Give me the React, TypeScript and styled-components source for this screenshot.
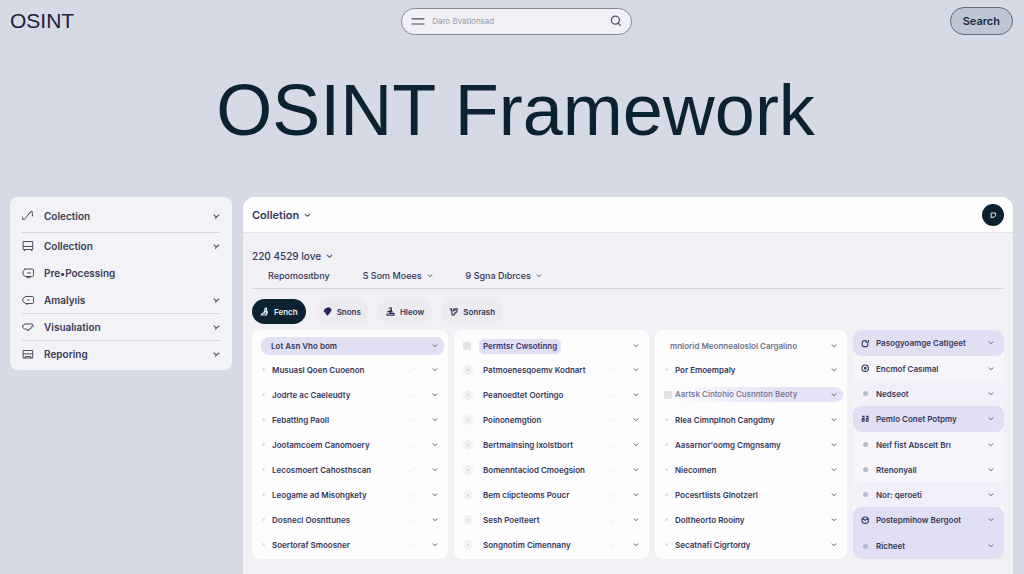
import React from "react";
import styled, { createGlobalStyle, css } from "styled-components";

const ink = "#34365a";
const deep = "#0b2230";
const lilac = "#e1dff4";

const GlobalStyle = createGlobalStyle`
  *, *::before, *::after { box-sizing: border-box; }
  body {
    margin: 0;
    background: #d6dae5;
    color: ${ink};
    font-family: Inter, "Liberation Sans", sans-serif;
  }
  button, input { font: inherit; color: inherit; }
  button { border: 0; padding: 0; background: none; text-align: left; cursor: pointer; }
  svg { display: block; flex: none; }
`;

const Page = styled.div`
  min-height: 100vh;
  display: flex;
  flex-direction: column;
`;

const TopBar = styled.header`
  display: grid;
  grid-template-columns: 39fr 23fr 38fr;
  align-items: center;
  padding: 7px 11px 0 10px;
`;

const Logo = styled.a`
  color: #1b2138;
  font-family: "Liberation Sans", Arial, sans-serif;
  font-size: 21px;
  line-height: 28px;
  text-decoration: none;
`;

const SearchForm = styled.form`
  display: flex;
  align-items: center;
  gap: 7px;
  height: 27px;
  padding: 0 9px;
  border: 1px solid #85889a;
  border-radius: 14px;
  background: #f0f0f6;
  color: #4a4c5c;
`;

const SearchInput = styled.input`
  flex: 1;
  min-width: 0;
  border: 0;
  padding: 0;
  background: none;
  outline: none;
  font-size: 8px;
  &::placeholder { color: #9c9da9; opacity: 1; }
`;

const SearchButton = styled.button`
  justify-self: end;
  height: 28px;
  padding: 0 12px;
  border: 1px solid #5f6a7b;
  border-radius: 14px;
  background: #bdc7d3;
  color: #1d2740;
  font-size: 11px;
  font-weight: 600;
`;

const Title = styled.h1`
  margin: 0;
  padding: 31px 0 43px 7px;
  color: ${deep};
  font-family: "Liberation Sans", Arial, sans-serif;
  font-size: 72px;
  font-weight: 400;
  line-height: 88px;
  text-align: center;
`;

const Body = styled.div`
  flex: 1;
  display: grid;
  grid-template-columns: 222px minmax(0, 1fr);
  gap: 11px;
  padding: 0 11px 0 10px;
`;

const Sidebar = styled.nav`
  align-self: start;
  padding: 3px 12px 2px;
  border-radius: 8px;
  background: #f2f2f7;
`;

const SideItem = styled.button<{ $ruled?: boolean; $tall?: boolean }>`
  display: flex;
  align-items: center;
  width: 100%;
  height: ${(p) => (p.$tall ? 33 : 27)}px;
  border-bottom: 1px solid ${(p) => (p.$ruled ? "#d3d3db" : "transparent")};
  color: #3a3c55;
  font-size: 10px;
  font-weight: 600;
  svg:last-child { margin-left: auto; }
`;

const SideLabel = styled.span`
  margin-left: 10px;
`;

const Panel = styled.main`
  display: flex;
  flex-direction: column;
  border-radius: 12px 12px 0 0;
  background: #f0f0f5;
  overflow: hidden;
`;

const PanelHead = styled.div`
  display: flex;
  align-items: center;
  justify-content: space-between;
  height: 36px;
  padding: 1px 9px 0;
  border-bottom: 1px solid #e3e3ea;
  background: #fefefe;
`;

const Dropdown = styled.button<{ $size: number; $bold?: boolean }>`
  display: flex;
  align-items: center;
  gap: 5px;
  font-size: ${(p) => p.$size}px;
  font-weight: ${(p) => (p.$bold ? 600 : 500)};
  line-height: 16px;
  white-space: nowrap;
`;

const Avatar = styled.button`
  display: grid;
  place-items: center;
  width: 22px;
  height: 22px;
  border-radius: 50%;
  background: ${deep};
  color: #dfe6ee;
`;

const PanelBody = styled.div`
  padding: 15px 9px;
`;

const Tabs = styled.div`
  display: flex;
  align-items: flex-start;
  gap: 33px;
  height: 25px;
  padding: 4px 16px 0;
  border-bottom: 1px solid #d5d4de;
`;

const Chips = styled.div`
  display: flex;
  gap: 9px;
  padding: 10px 0 6px;
`;

const Chip = styled.button<{ $active?: boolean }>`
  display: inline-flex;
  align-items: center;
  gap: 5px;
  height: 25px;
  padding: 0 8px;
  border-radius: 13px;
  background: ${(p) => (p.$active ? deep : "#ebebf0")};
  color: ${(p) => (p.$active ? "#e6edf2" : ink)};
  font-size: 8px;
  font-weight: 600;
`;

const Columns = styled.div`
  display: grid;
  grid-template-columns: 196fr 195fr 192fr 151fr;
  gap: 6px;
`;

const Card = styled.div`
  padding: 7px 4px 1px 9px;
  border-radius: 8px;
  background: #fdfdfe;
`;

const itemBase = css`
  display: flex;
  align-items: center;
  width: 100%;
  font-size: 8px;
  font-weight: 600;
  white-space: nowrap;
`;

const Item = styled.button<{ $first?: boolean; $fill?: boolean }>`
  ${itemBase}
  height: ${(p) => (p.$first ? 18 : 25)}px;
  margin-bottom: ${(p) => (p.$first ? 2 : 0)}px;
  padding-right: 6px;
  border-radius: 8px;
  background: ${(p) => (p.$first && p.$fill ? lilac : "transparent")};
`;

const Marker = styled.span<{ $width: number }>`
  display: flex;
  align-items: center;
  flex: none;
  width: ${(p) => p.$width}px;
`;

const Dot = styled.i<{ $kind: "speck" | "ring" | "square" | "bead" }>`
  display: block;
  ${(p) => p.$kind === "speck" && css`width: 3px; height: 3px; margin-left: 1px; border-radius: 50%; background: #dedee6;`}
  ${(p) => p.$kind === "ring" && css`width: 10px; height: 10px; border: 4px solid #f1f1f4; border-radius: 50%; background: #cfcfd8;`}
  ${(p) => p.$kind === "square" && css`width: 8px; height: 8px; border-radius: 1px; background: #e2e2e8;`}
  ${(p) => p.$kind === "bead" && css`width: 5px; height: 5px; margin-left: 2px; border-radius: 50%; background: #b9b9ca;`}
`;

const Label = styled.span<{ $tone?: "soft" | "tag" | "bar" }>`
  ${(p) => p.$tone === "soft" && css`color: #6d7288;`}
  ${(p) => p.$tone === "tag" && css`margin-left: -4px; padding: 0 4px; border-radius: 5px; background: ${lilac}; color: #3b3570; line-height: 15px;`}
  ${(p) => p.$tone === "bar" && css`flex: 1; margin-right: -12px; border-radius: 0 8px 8px 0; background: linear-gradient(90deg, #fdfdfe, #e6e2f7 60%); color: #6f6c94; font-weight: 500; line-height: 15px;`}
`;

const Tail = styled.span`
  display: flex;
  align-items: center;
  gap: 17px;
  margin-left: auto;
`;

const Stack = styled.div`
  border-radius: 8px;
  background: #f6f6fa;
  overflow: hidden;
`;

const StackItem = styled.button<{ $shade: "none" | "tint" | "fill"; $join?: "top" | "bottom" }>`
  ${itemBase}
  height: ${(p) => (p.$shade === "fill" ? 26 : 25)}px;
  padding: 0 10px 0 8px;
  border-radius: ${(p) => (p.$join === "top" ? "8px 8px 0 0" : p.$join === "bottom" ? "0 0 8px 8px" : "8px")};
  background: ${(p) => ({ none: "transparent", tint: "#f1eff9", fill: lilac })[p.$shade]};
`;

const Chevron = ({ size = 6 }: { size?: number }) => (
  <svg width={size} height={size} viewBox="0 0 6 6" fill="none" stroke="#66687f" strokeWidth="1" strokeLinecap="round" strokeLinejoin="round" aria-hidden="true">
    <path d="M1 1.9 3 3.6 5 1.9" />
  </svg>
);

const SideChevron = () => (
  <svg width="7" height="7" viewBox="0 0 7 7" fill="none" stroke="#55576c" strokeWidth="1.1" strokeLinecap="round" aria-hidden="true">
    <path d="M1 1.8 3.2 4.2 6 2M3.2 4.2 2.6 5.4" />
  </svg>
);

const FaintTick = () => (
  <svg width="7" height="6" viewBox="0 0 7 6" fill="none" stroke="#f3f3f6" strokeWidth="1.2" aria-hidden="true">
    <path d="M.5 3.5 2.5 5 6.5 1" />
  </svg>
);

const sideIcons: Record<string, React.ReactNode> = {
  trend: <path d="M.7 7.2v2.2l1.8.1L8.2 2.2 10 1l.5 5M8.2 2.2 7 3.2" />,
  tray: <path d="M1.5 1.5h9.2v8H1.5zM1.5 6.5h9.2M2.5 9.5v1.3M9.8 9.5v1.3" />,
  card: <path d="M3 2h7.5q1 0 1 1v5.5q0 1-1 1H3.2L1 7.8V4.5L3 2ZM5.5 6h3M4 9.5l1 1.2h3" />,
  bubble: <path d="M3.5 2.5h7q1 0 1 1v5q0 1-1 1h-7L.8 7.2V4.6l2.7-2.1ZM5.4 6h1.6M3.4 9.5l2 .9" />,
  cloud: <path d="M.8 5 2.5 3h7.7l1.3 2.3-2 .2L8.6 8 7 8l-.8 2L4.7 8H2.3L.8 6.6V5Z" />,
  shelf: <path d="M1.5 2.5h9.2v7.5H1.5zM1.5 5.8h9.2M3.3 10V8.4h5.6V10" />,
};

const SideIcon = ({ name }: { name: string }) => (
  <svg width="12" height="12" viewBox="0 0 12 12" fill="none" stroke="#4b4d60" strokeWidth="1" strokeLinejoin="round" strokeLinecap="round" aria-hidden="true">
    {sideIcons[name]}
  </svg>
);

const chipIcons: Record<string, React.ReactNode> = {
  flask: (
    <>
      <path d="M4.6 1 7.2.2 6.8 2 8 5.4 6.6 8.6H.6L1.2 6.4 3.4 5.6Z" fill="currentColor" />
      <path d="M2.6 7.2h2.6l.6-2M4.8 3l1.4.4" fill="none" stroke={deep} strokeWidth=".8" />
    </>
  ),
  gem: <path d="M4.4.4 6.4.2 8.6 2.2 7.8 4.8 4.6 8.8 2.8 7.2 2.6 5.8.6 5 1.6 2Z" fill="#29245a" />,
  stamp: <path d="M2.6 1h2.8v2.4H3.4M1.2 4.6h5.4M4.6 3.4v3.2M1 6.4v1.8h7V6.4H2.6" fill="none" stroke="currentColor" strokeWidth="1.2" />,
  nodes: <path d="M.6 1.8h1.8v1.8H1.6M3 4.4v3.4h2.2l.6-1.6 2-1.4.4-3H5L3.8 4.4M5.4 3.8l1.2-.8" fill="none" stroke="currentColor" strokeWidth="1.2" />,
};

const ChipIcon = ({ name }: { name: string }) => (
  <svg width="9" height="9" viewBox="0 0 9 9" aria-hidden="true">
    {chipIcons[name]}
  </svg>
);

const stackIcons: Record<string, React.ReactNode> = {
  copy: <path d="M4.8 1.8H2.4L1.2 3v3.4l1.4 1.2h3L6.8 6.4V4.2M5 1v2.2h2.4V1" />,
  target: <><circle cx="4.2" cy="4.2" r="3.2" /><path d="M3.6 3.6h1.4v1.4H3.6z" /></>,
  grid: <path d="M1 1.4h2v2.2H1.3v2.6H3V4M5 1.4h2v2.2H5.3v2.6H7V4" />,
  smile: <><circle cx="4.2" cy="4.2" r="3.2" /><path d="M1.3 3.4h1.6l1.3 1 1.3-1h1.6" /></>,
};

const StackIcon = ({ name }: { name: string }) => (
  <svg width="9" height="9" viewBox="0 0 9 9" fill="none" stroke="#34365a" strokeWidth="1.1" aria-hidden="true">
    {stackIcons[name]}
  </svg>
);

const sideItems = [
  { label: "Colection", icon: "trend", ruled: true, tall: true, open: true },
  { label: "Collection", icon: "tray", open: true },
  { label: "Pre•Pocessing", icon: "card" },
  { label: "Amalyıis", icon: "bubble", ruled: true, open: true },
  { label: "Visualıation", icon: "cloud", ruled: true, open: true },
  { label: "Reporing", icon: "shelf", open: true },
];

const firstColumn = [
  "Lot Asn Vho bom", "Musuasl Qoen Cuoenon", "Jodrte ac Caeleudty", "Febattlng Paoll", "Jootamcoem Canomoery",
  "Lecosmoert Cahosthscan", "Leogame ad Misohgkety", "Dosnecl Oosnttunes", "Soertoraf Smoosner",
];
const secondColumn = [
  "Permtsr Cwsotinng", "Patmoenesqoemv Kodnart", "Peanoedtet Oortingo", "Poinonemgtion", "Bertmalnsing lxolstbort",
  "Bomenntaciod Cmoegsion", "Bem clipcteoms Poucr", "Sesh Poelteert", "Songnotim Cimennany",
];
const thirdColumn = [
  "mnlorid Meonnealoslol Cargalino", "Por Emoempaly", "Aartsk Cintohio Cusnnton Beoty", "Rlea Cimnplnoh Cangdmy",
  "Aasarnor'oomg Cmgnsamy", "Niecoımen", "Pocesrtlists Glnotzerl", "Doltheorto Rooiny", "Secatnafi Cigrtordy",
];
const stack: { label: string; icon?: string; shade?: "tint" | "fill"; join?: "top" | "bottom" }[] = [
  { label: "Pasogyoamge Catlgeet", icon: "copy", shade: "fill" },
  { label: "Encmof Casımal", icon: "target" },
  { label: "Nedseot", shade: "tint" },
  { label: "Pemlo Conet Potpmy", icon: "grid", shade: "fill" },
  { label: "Neıf fist Abscelt Brı" },
  { label: "Rtenonyall" },
  { label: "Nor: qeroeti", shade: "tint" },
  { label: "Postepmihow Bergoot", icon: "smile", shade: "fill", join: "top" },
  { label: "Richeet", shade: "fill", join: "bottom" },
];

export default function App() {
  return (
    <>
      <GlobalStyle />
      <Page>
        <TopBar>
          <Logo href="#">OSINT</Logo>
          <SearchForm role="search">
            <button type="button" aria-label="Menu">
              <svg width="14" height="9" viewBox="0 0 14 9" stroke="currentColor" strokeWidth="1.2" strokeLinecap="round">
                <path d="M1 1.8h12M1 7h12" />
              </svg>
            </button>
            <SearchInput type="search" aria-label="Search the framework" placeholder="Daro Bvatlonsad" />
            <button type="submit" aria-label="Submit search">
              <svg width="12" height="12" viewBox="0 0 12 12" fill="none" stroke="currentColor" strokeWidth="1.2" strokeLinecap="round">
                <circle cx="5.4" cy="5.2" r="4" />
                <path d="m8.4 8.4 1.8 2" />
              </svg>
            </button>
          </SearchForm>
          <SearchButton>Search</SearchButton>
        </TopBar>
        <Title>OSINT Framework</Title>
        <Body>
          <Sidebar aria-label="Phases">
            {sideItems.map((item) => (
              <SideItem key={item.label} $ruled={item.ruled} $tall={item.tall}>
                <SideIcon name={item.icon} />
                <SideLabel>{item.label}</SideLabel>
                {item.open && <SideChevron />}
              </SideItem>
            ))}
          </Sidebar>
          <Panel>
            <PanelHead>
              <Dropdown $size={11} $bold>Colletion <Chevron size={7} /></Dropdown>
              <Avatar aria-label="Profile">
                <svg width="7" height="7" viewBox="0 0 7 7" fill="none" stroke="currentColor" strokeWidth="1">
                  <path d="M1.2 6V1h4.3v2.6L4 5.2H1.2" />
                </svg>
              </Avatar>
            </PanelHead>
            <PanelBody>
              <Dropdown $size={10}>220 4529 love <Chevron size={7} /></Dropdown>
              <Tabs>
                <Dropdown $size={9}>Repomosıtbny</Dropdown>
                <Dropdown $size={9}>S Som Moees <Chevron /></Dropdown>
                <Dropdown $size={9}>9 Sgna Dıbrces <Chevron /></Dropdown>
              </Tabs>
              <Chips>
                <Chip $active><ChipIcon name="flask" />Fench</Chip>
                <Chip><ChipIcon name="gem" />Snons</Chip>
                <Chip><ChipIcon name="stamp" />Hleow</Chip>
                <Chip><ChipIcon name="nodes" />Sonrash</Chip>
              </Chips>
              <Columns>
                <Card>
                  {firstColumn.map((label, i) => (
                    <Item key={label} $first={i === 0} $fill>
                      <Marker $width={i ? 11 : 10}>{i > 0 && <Dot $kind="speck" />}</Marker>
                      <Label>{label}</Label>
                      <Tail>{i > 0 && <FaintTick />}<Chevron /></Tail>
                    </Item>
                  ))}
                </Card>
                <Card>
                  {secondColumn.map((label, i) => (
                    <Item key={label} $first={i === 0}>
                      <Marker $width={20}><Dot $kind={i ? "ring" : "square"} /></Marker>
                      <Label $tone={i ? undefined : "tag"}>{label}</Label>
                      <Tail>{i > 0 && <FaintTick />}<Chevron /></Tail>
                    </Item>
                  ))}
                </Card>
                <Card>
                  {thirdColumn.map((label, i) => (
                    <Item key={label} $first={i === 0}>
                      <Marker $width={i ? 11 : 6}>{i > 0 && <Dot $kind={i === 2 ? "square" : "speck"} />}</Marker>
                      <Label $tone={i === 0 ? "soft" : i === 2 ? "bar" : undefined}>{label}</Label>
                      <Tail><Chevron /></Tail>
                    </Item>
                  ))}
                </Card>
                <Stack>
                  {stack.map((item) => (
                    <StackItem key={item.label} $shade={item.shade ?? "none"} $join={item.join}>
                      <Marker $width={15}>{item.icon ? <StackIcon name={item.icon} /> : <Dot $kind="bead" />}</Marker>
                      <Label>{item.label}</Label>
                      <Tail><Chevron /></Tail>
                    </StackItem>
                  ))}
                </Stack>
              </Columns>
            </PanelBody>
          </Panel>
        </Body>
      </Page>
    </>
  );
}
